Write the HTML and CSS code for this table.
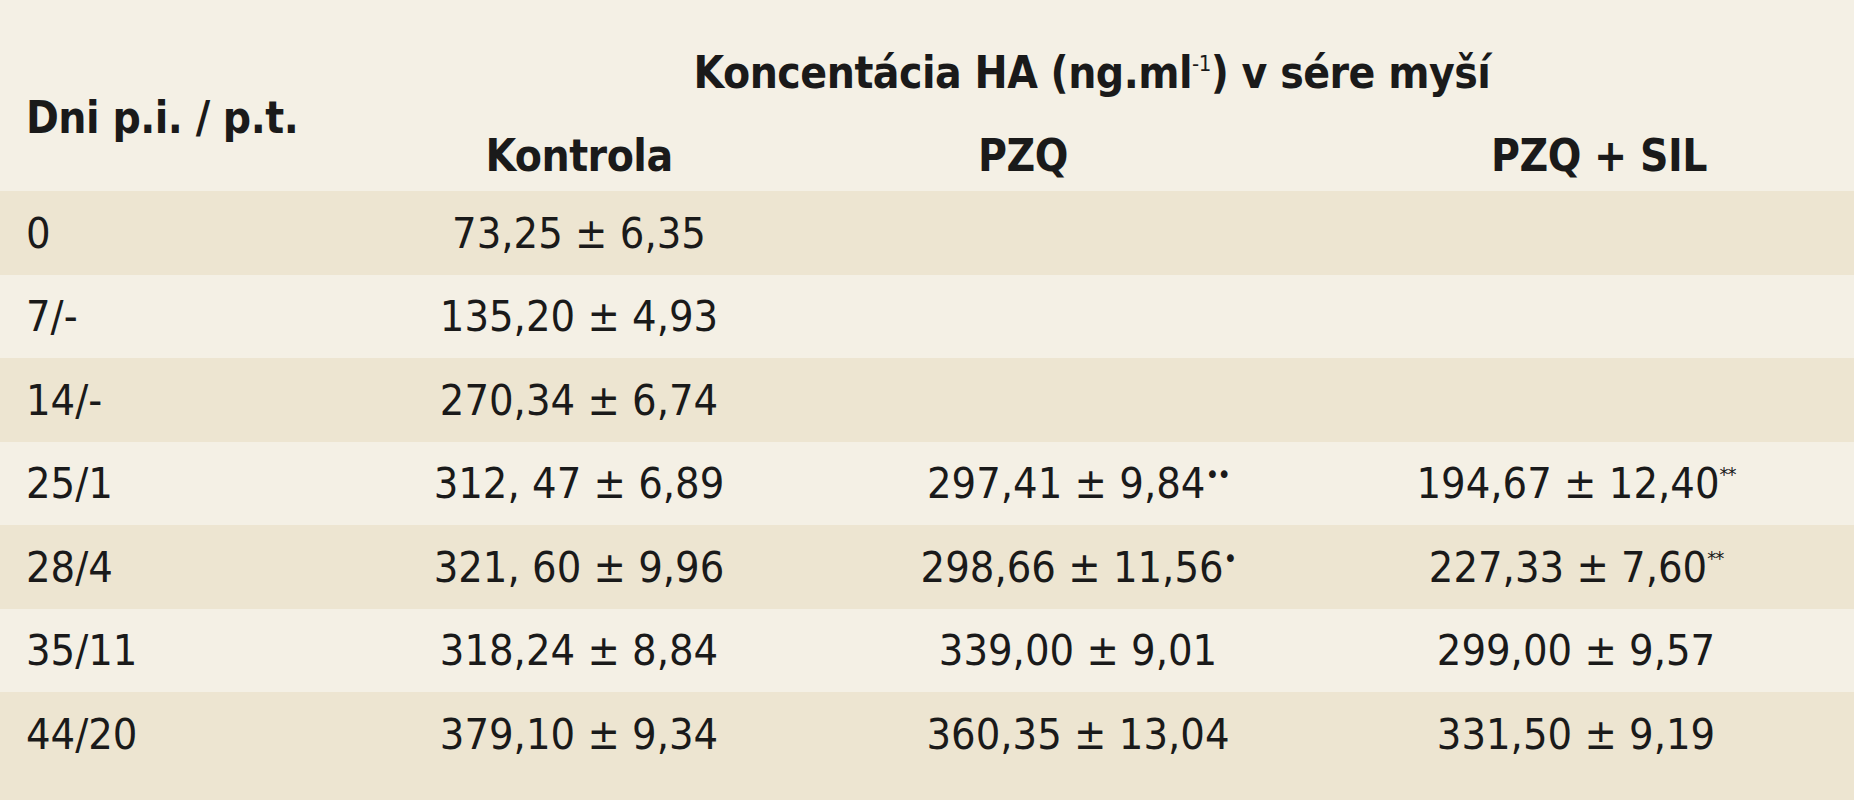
FILE: index.html
```html
<!DOCTYPE html>
<html lang="sk">
<head>
<meta charset="utf-8">
<title>Koncentácia HA</title>
<link rel="stylesheet" href="styles.css">
</head>
<body>
<table class="ha-table">
  <colgroup>
    <col class="c-day">
    <col class="c-ctrl">
    <col class="c-pzq">
    <col class="c-sil">
  </colgroup>
  <thead>
    <tr class="head-top">
      <th class="h-day" rowspan="2">Dni p.i. / p.t.</th>
      <th class="h-title" colspan="3">Koncentácia HA (ng.ml<sup class="exp">-1</sup>) v sére myší</th>
    </tr>
    <tr class="head-sub">
      <th class="h-col">Kontrola</th>
      <th class="h-col h-pzq">PZQ</th>
      <th class="h-col h-sil">PZQ + SIL</th>
    </tr>
  </thead>
  <tbody>
    <tr class="band-dark"><td class="day">0</td><td class="val">73,25 ± 6,35</td><td class="val"></td><td class="val"></td></tr>
    <tr class="band-light"><td class="day">7/-</td><td class="val">135,20 ± 4,93</td><td class="val"></td><td class="val"></td></tr>
    <tr class="band-dark"><td class="day">14/-</td><td class="val">270,34 ± 6,74</td><td class="val"></td><td class="val"></td></tr>
    <tr class="band-light"><td class="day">25/1</td><td class="val">312, 47 ± 6,89</td><td class="val">297,41 ± 9,84<sup class="mark dot">••</sup></td><td class="val">194,67 ± 12,40<sup class="mark star">**</sup></td></tr>
    <tr class="band-dark"><td class="day">28/4</td><td class="val">321, 60 ± 9,96</td><td class="val">298,66 ± 11,56<sup class="mark dot">•</sup></td><td class="val">227,33 ± 7,60<sup class="mark star">**</sup></td></tr>
    <tr class="band-light"><td class="day">35/11</td><td class="val">318,24 ± 8,84</td><td class="val">339,00 ± 9,01</td><td class="val">299,00 ± 9,57</td></tr>
    <tr class="band-dark last"><td class="day">44/20</td><td class="val">379,10 ± 9,34</td><td class="val">360,35 ± 13,04</td><td class="val">331,50 ± 9,19</td></tr>
  </tbody>
</table>
</body>
</html>
```

FILE: styles.css
```css
html, body {
  margin: 0;
  padding: 0;
  background: #f4f0e5;
}

body {
  width: 1854px;
  height: 800px;
  overflow: hidden;
  font-family: "DejaVu Sans Condensed", "DejaVu Sans", sans-serif;
  color: #1a1a1a;
}

.ha-table {
  width: 1854px;
  border-collapse: collapse;
  table-layout: fixed;
}

.c-day { width: 300px; }
.c-ctrl { width: 558px; }
.c-pzq { width: 440px; }
.c-sil { width: 556px; }

th {
  font-weight: bold;
  font-size: 44px;
  line-height: 50px;
  padding: 0;
  letter-spacing: -0.5px;
}

.head-top th.h-title {
  height: 112px;
  box-sizing: border-box;
  padding: 48px 0 14px 30px;
  text-align: center;
  vertical-align: top;
}

.h-day {
  text-align: left;
  padding: 44px 0 0 26px;
  vertical-align: middle;
}

.head-sub th.h-col {
  height: 79px;
  box-sizing: border-box;
  padding: 19px 0 10px;
  text-align: center;
  vertical-align: top;
}

.head-sub th.h-pzq {
  padding-right: 110px;
}

.head-sub th.h-sil {
  padding-left: 46px;
}

.exp {
  font-size: 22px;
  line-height: 0;
  vertical-align: 17px;
  font-weight: normal;
}

td {
  height: 83.5px;
  padding: 0;
  font-size: 43px;
  line-height: 50px;
  vertical-align: middle;
}

.band-dark td { background: #ede5d1; }
.band-light td { background: #f4f0e5; }

.last td {
  height: 108px;
  padding-bottom: 24px;
  box-sizing: border-box;
}

.day {
  text-align: left;
  padding-left: 26px;
}

.val {
  text-align: center;
}

.mark {
  line-height: 0;
}

.dot {
  font-size: 26px;
  vertical-align: 14px;
  letter-spacing: -2px;
}

.star {
  font-size: 20px;
  vertical-align: 17px;
  letter-spacing: -1px;
}
```
